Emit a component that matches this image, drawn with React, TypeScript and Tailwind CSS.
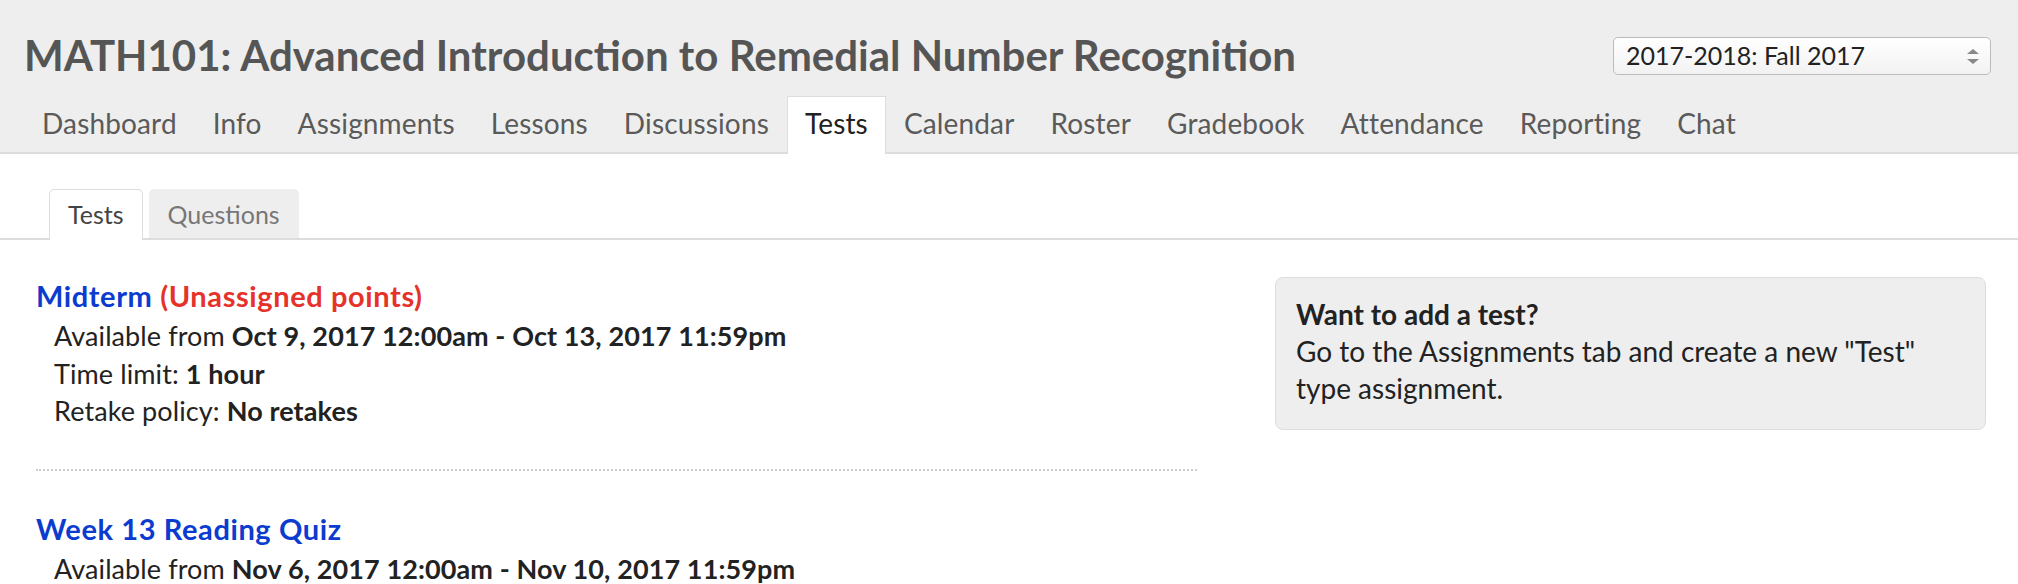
import React from 'react';

const navTabs = [
  'Dashboard',
  'Info',
  'Assignments',
  'Lessons',
  'Discussions',
  'Tests',
  'Calendar',
  'Roster',
  'Gradebook',
  'Attendance',
  'Reporting',
  'Chat',
];

type TestItem = {
  title: string;
  warning?: string;
  from: string;
  timeLimit?: string;
  retake?: string;
};

const tests: TestItem[] = [
  {
    title: 'Midterm',
    warning: '(Unassigned points)',
    from: 'Oct 9, 2017 12:00am - Oct 13, 2017 11:59pm',
    timeLimit: '1 hour',
    retake: 'No retakes',
  },
  {
    title: 'Week 13 Reading Quiz',
    from: 'Nov 6, 2017 12:00am - Nov 10, 2017 11:59pm',
  },
];

const SemesterSelect: React.FC = () => (
  <div className="mt-2 flex h-[38px] w-[378px] items-center justify-between rounded-[5px] border border-[#bbbbbb] bg-linear-to-b from-white to-[#f2f2f2] pl-3 pr-[11px] text-[25px] text-[#222]">
    <span>2017-2018: Fall 2017</span>
    <svg width="12" height="15" viewBox="0 0 12 15" className="text-[#888]">
      <path d="M6 0 L12 5 H0 Z" fill="currentColor" />
      <path d="M0 10 H12 L6 15 Z" fill="currentColor" />
    </svg>
  </div>
);

const TestBlock: React.FC<{ test: TestItem }> = ({ test }) => (
  <div className="text-[27px] text-[#222]">
    <div className="text-[29px] font-bold leading-[37px] tracking-[0.6px]">
      <a className="text-[#0b3bcf]">{test.title}</a>
      {test.warning && <span className="text-[#e5322a]"> {test.warning}</span>}
    </div>
    <div className="mt-[3px] pl-[18px] leading-[37.5px] tracking-[0.1px]">
      <div>
        Available from <b>{test.from}</b>
      </div>
      {test.timeLimit && (
        <div>
          Time limit: <b>{test.timeLimit}</b>
        </div>
      )}
      {test.retake && (
        <div>
          Retake policy: <b>{test.retake}</b>
        </div>
      )}
    </div>
  </div>
);

export default function App() {
  return (
    <div className="h-[584px] overflow-hidden bg-white font-['Lato',sans-serif]">
      <header className="border-b-2 border-[#dddddd] bg-[#eeeeee] pl-6 pr-[27px] pt-[29px]">
        <div className="flex items-start justify-between">
          <h1 className="text-[42px] font-bold leading-[52px] text-[#555]">
            MATH101: Advanced Introduction to Remedial Number Recognition
          </h1>
          <SemesterSelect />
        </div>
        <nav className="mt-[15px] flex items-start text-[28px] leading-[36px] tracking-[0.15px]">
          {navTabs.map((tab) =>
            tab === 'Tests' ? (
              <a
                key={tab}
                className="-mb-[2px] h-[58px] border border-b-0 border-[#dddddd] bg-white px-[17px] pt-[8px] text-[#222]"
              >
                {tab}
              </a>
            ) : (
              <a
                key={tab}
                className="h-[56px] border border-b-0 border-transparent px-[17px] pt-[8px] text-[#5a5a5a]"
              >
                {tab}
              </a>
            ),
          )}
        </nav>
      </header>

      <div className="flex items-end gap-[6px] border-b-2 border-[#dddddd] pl-[49px] pt-[35px] text-[25px] leading-[34px]">
        <div className="-mb-[2px] rounded-t-[5px] border border-b-0 border-[#dddddd] bg-white px-[18px] pb-[9px] pt-[7px] text-[#444]">
          Tests
        </div>
        <div className="rounded-t-[5px] border border-b-0 border-transparent bg-[#eeeeee] px-[18px] pb-[7px] pt-[7px] text-[#777]">
          Questions
        </div>
      </div>

      <main className="flex pl-[36px] pr-[32px] pt-[37px]">
        <div className="flex-1">
          {tests.map((test, i) => (
            <React.Fragment key={test.title}>
              {i > 0 && <hr className="my-[39px] border-t-2 border-dotted border-[#cccccc]" />}
              <TestBlock test={test} />
            </React.Fragment>
          ))}
        </div>
        <aside className="ml-[78px] w-[711px] self-start rounded-[8px] border border-[#dddddd] bg-[#eeeeee] px-5 pb-[22px] pt-[18px] text-[28px] leading-[37px] text-[#222]">
          <div className="font-bold">Want to add a test?</div>
          <div>Go to the Assignments tab and create a new "Test" type assignment.</div>
        </aside>
      </main>
    </div>
  );
}
